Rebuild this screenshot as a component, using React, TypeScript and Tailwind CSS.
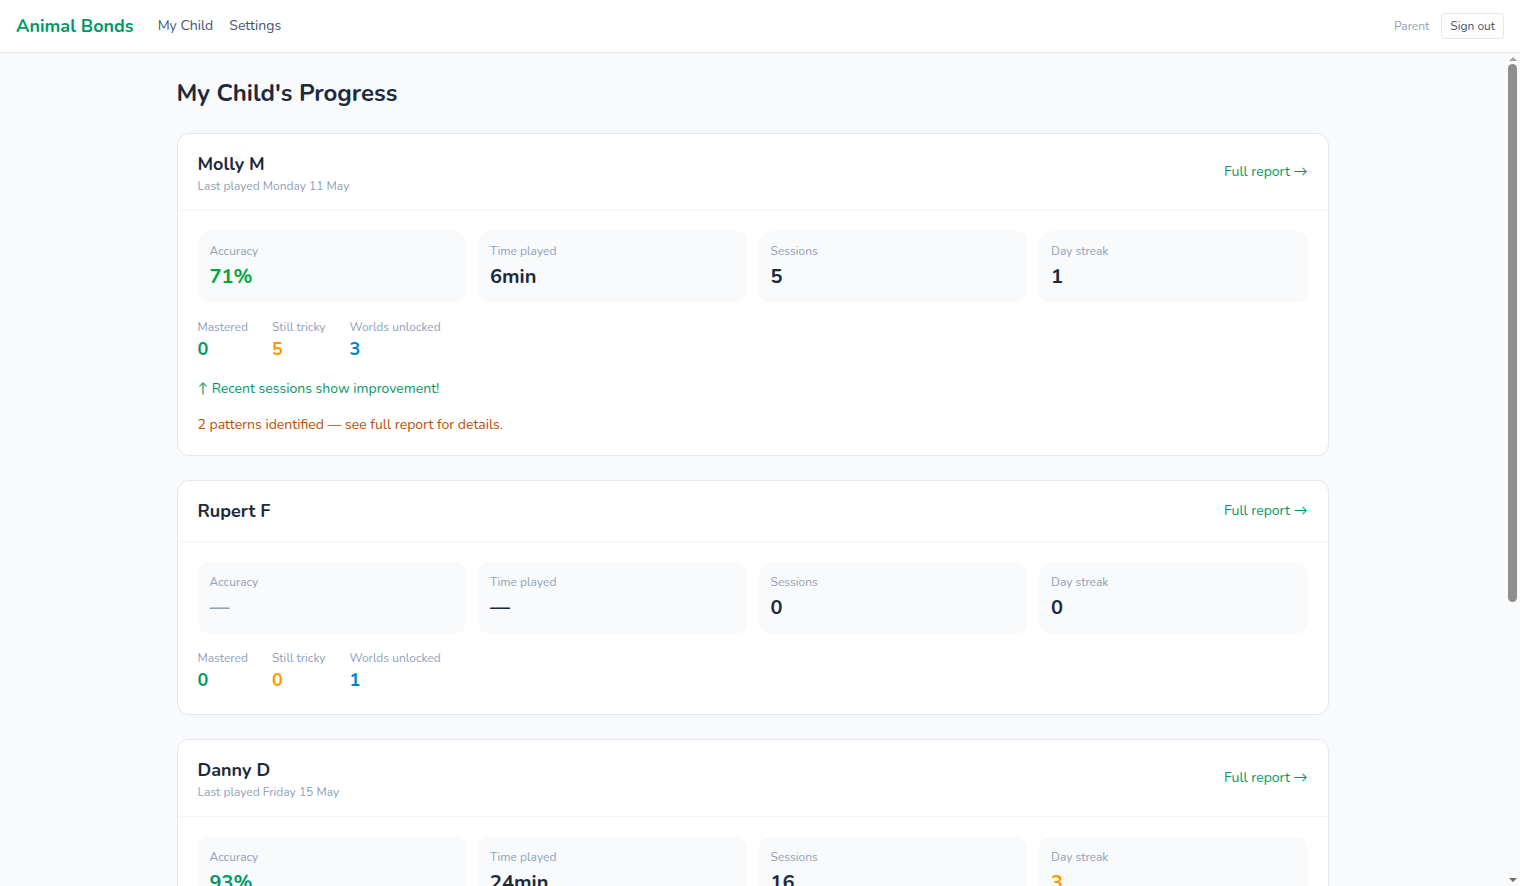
type Child = {
  name: string;
  lastPlayed?: string;
  accuracy: string;
  accuracyColor: string;
  time: string;
  sessions: string;
  streak: string;
  streakColor: string;
  mastered: string;
  tricky: string;
  worlds: string;
  improvement?: string;
  patterns?: string;
};

const children: Child[] = [
  {
    name: "Molly M",
    lastPlayed: "Last played Monday 11 May",
    accuracy: "71%",
    accuracyColor: "text-green-600",
    time: "6min",
    sessions: "5",
    streak: "1",
    streakColor: "text-slate-800",
    mastered: "0",
    tricky: "5",
    worlds: "3",
    improvement: "Recent sessions show improvement!",
    patterns: "2 patterns identified — see full report for details.",
  },
  {
    name: "Rupert F",
    accuracy: "—",
    accuracyColor: "text-slate-400",
    time: "—",
    sessions: "0",
    streak: "0",
    streakColor: "text-slate-800",
    mastered: "0",
    tricky: "0",
    worlds: "1",
  },
  {
    name: "Danny D",
    lastPlayed: "Last played Friday 15 May",
    accuracy: "93%",
    accuracyColor: "text-emerald-600",
    time: "24min",
    sessions: "16",
    streak: "3",
    streakColor: "text-amber-500",
    mastered: "4",
    tricky: "1",
    worlds: "5",
  },
];

function StatBox({ label, value, color }: { label: string; value: string; color: string }) {
  return (
    <div className="rounded-xl bg-slate-50 p-3">
      <div className="text-xs leading-4 text-slate-400">{label}</div>
      <div className={`mt-1 text-xl leading-7 font-bold ${color}`}>{value}</div>
    </div>
  );
}

function ChildCard({ c }: { c: Child }) {
  return (
    <section className="rounded-xl border border-slate-200 bg-white">
      <div className="flex items-center justify-between border-b border-slate-100 px-5 py-4">
        <div>
          <h2 className="text-lg leading-7 font-bold text-slate-800">{c.name}</h2>
          {c.lastPlayed && <p className="text-xs leading-4 text-slate-400">{c.lastPlayed}</p>}
        </div>
        <a className="text-sm text-emerald-600">Full report →</a>
      </div>
      <div className="p-5">
        <div className="grid grid-cols-4 gap-3">
          <StatBox label="Accuracy" value={c.accuracy} color={c.accuracyColor} />
          <StatBox label="Time played" value={c.time} color="text-slate-800" />
          <StatBox label="Sessions" value={c.sessions} color="text-slate-800" />
          <StatBox label="Day streak" value={c.streak} color={c.streakColor} />
        </div>
        <div className="mt-4 flex gap-6">
          <div>
            <div className="text-xs leading-4 text-slate-400">Mastered</div>
            <div className="text-lg leading-7 font-bold text-emerald-600">{c.mastered}</div>
          </div>
          <div>
            <div className="text-xs leading-4 text-slate-400">Still tricky</div>
            <div className="text-lg leading-7 font-bold text-amber-500">{c.tricky}</div>
          </div>
          <div>
            <div className="text-xs leading-4 text-slate-400">Worlds unlocked</div>
            <div className="text-lg leading-7 font-bold text-sky-600">{c.worlds}</div>
          </div>
        </div>
        {c.improvement && (
          <p className="mt-4 text-sm leading-5 text-emerald-600">↑ {c.improvement}</p>
        )}
        {c.patterns && <p className="mt-4 text-sm leading-5 text-amber-700">{c.patterns}</p>}
      </div>
    </section>
  );
}

function ScrollRail() {
  return (
    <div className="flex w-[15px] shrink-0 flex-col items-center bg-[#f9fafb] py-[4px]">
      <div className="h-0 w-0 border-x-[4px] border-b-[4px] border-x-transparent border-b-[#a3a3a3]" />
      <div className="mt-[3px] h-[538px] w-[9px] rounded-full bg-[#8f8f8f]" />
      <div className="flex-1" />
      <div className="h-0 w-0 border-x-[4px] border-t-[4px] border-x-transparent border-t-[#6b6b6b]" />
    </div>
  );
}

export default function App() {
  return (
    <div className="flex h-screen flex-col bg-slate-50 font-['Nunito','Lato',sans-serif]">
      <header className="flex h-[53px] shrink-0 items-center justify-between border-b border-slate-200 bg-white px-4">
        <div className="flex items-center gap-6">
          <span className="text-lg font-bold text-emerald-600">Animal Bonds</span>
          <nav className="flex gap-4 text-sm text-slate-600">
            <a>My Child</a>
            <a>Settings</a>
          </nav>
        </div>
        <div className="flex items-center gap-3">
          <span className="text-xs text-slate-400">Parent</span>
          <button className="rounded border border-slate-200 px-2 py-1 text-xs text-slate-600">Sign out</button>
        </div>
      </header>
      <div className="flex min-h-0 flex-1">
        <main className="min-w-0 flex-1 overflow-hidden">
          <div className="mx-auto max-w-6xl pt-6 pb-10">
            <h1 className="mb-6 text-2xl font-bold text-slate-800">My Child's Progress</h1>
            <div className="space-y-6">
              {children.map((c) => (
                <ChildCard key={c.name} c={c} />
              ))}
            </div>
          </div>
        </main>
        <ScrollRail />
      </div>
    </div>
  );
}
